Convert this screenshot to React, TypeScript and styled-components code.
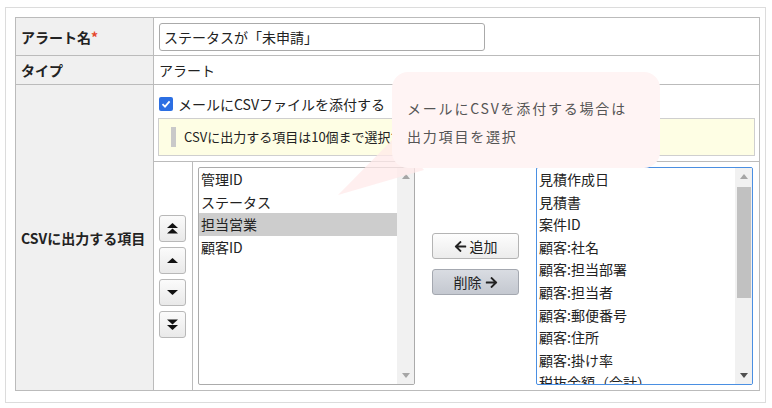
import styled, { createGlobalStyle } from 'styled-components'
import { FaArrowLeft, FaArrowRight } from 'react-icons/fa'

const GlobalStyle = createGlobalStyle`
  html, body {
    margin: 0;
    background: #fff;
  }
  body {
    font-family: "Noto Sans CJK JP", "Noto Sans", sans-serif;
    font-size: 14px;
    color: #222;
  }
  * {
    box-sizing: border-box;
  }
`

const Frame = styled.div`
  position: relative;
  width: 761px;
  margin: 7px 0 0 5px;
  padding: 9px 5px 11px 9px;
  border: 1px solid #dcdcdc;
`

const FormGrid = styled.div`
  display: grid;
  grid-template-columns: 138px 606px;
  grid-template-rows: 38px 29px 306px;
  border-top: 1px solid #bbb;
  border-left: 1px solid #bbb;
`

const LabelCell = styled.div`
  display: flex;
  align-items: center;
  padding-left: 5px;
  background: #f0f0f0;
  font-weight: bold;
  line-height: 20px;
  color: #222;
  border-right: 1px solid #bbb;
  border-bottom: 1px solid #bbb;

  .req {
    color: #e5462b;
  }
`

const ValueCell = styled.div<{ $stack?: boolean }>`
  display: flex;
  flex-direction: ${(p) => (p.$stack ? 'column' : 'row')};
  align-items: ${(p) => (p.$stack ? 'stretch' : 'center')};
  padding: ${(p) => (p.$stack ? '0' : '0 5px')};
  line-height: 20px;
  border-right: 1px solid #bbb;
  border-bottom: 1px solid #bbb;
`

const TextInput = styled.div`
  width: 326px;
  height: 28px;
  padding: 0 4px;
  display: flex;
  align-items: center;
  border: 1px solid #aaa;
  border-radius: 3px;
  font-size: 14px;
  background: #fff;
`

const TopBlock = styled.div`
  padding: 8px 4px 5px 4px;
`

const CheckRow = styled.label`
  display: flex;
  align-items: center;
  gap: 5px;
  height: 22px;
  padding-left: 1px;
  font-size: 14px;
`

const CheckBox = styled.span`
  width: 14px;
  height: 14px;
  border-radius: 2px;
  background: #2c6fe3;
  display: flex;
  align-items: center;
  justify-content: center;
`

const Notice = styled.div`
  margin-top: 3px;
  height: 38px;
  display: flex;
  align-items: center;
  gap: 8px;
  padding-left: 12px;
  background: #fefee4;
  border: 1px solid #cfcfcf;
  font-size: 13px;
  white-space: nowrap;
  overflow: hidden;

  &::before {
    content: '';
    width: 5px;
    height: 20px;
    background: #c9c9c9;
    flex: none;
  }
`

const Picker = styled.div`
  flex: 1;
  display: grid;
  grid-template-columns: 39px 1fr;
  border-top: 1px solid #bbb;
`

const OrderColumn = styled.div`
  display: flex;
  flex-direction: column;
  justify-content: center;
  gap: 5px;
  padding-left: 5px;
  border-right: 1px solid #bbb;
`

const IconButton = styled.button`
  width: 27px;
  height: 27px;
  padding: 0;
  display: flex;
  align-items: center;
  justify-content: center;
  border: 1px solid #b8b8b8;
  border-radius: 3px;
  background: linear-gradient(#fbfbfb, #e9e9e9);
`

const ListArea = styled.div`
  display: flex;
  gap: 17px;
  padding: 5px 6px 5px 5px;
`

const ListBox = styled.div<{ $focused?: boolean }>`
  width: 217px;
  height: 218px;
  display: flex;
  border: 1px solid ${(p) => (p.$focused ? '#4a8fe2' : '#ababab')};
  border-radius: 2px;
  overflow: hidden;
  background: #fff;
`

const Items = styled.div`
  flex: 1;
  overflow: hidden;
`

const Item = styled.div<{ $selected?: boolean }>`
  height: 22.6px;
  line-height: 22.6px;
  padding-left: 2px;
  font-size: 14px;
  white-space: nowrap;
  background: ${(p) => (p.$selected ? '#cdcdcd' : 'transparent')};
`

const ScrollBar = styled.div`
  width: 17px;
  display: flex;
  flex-direction: column;
  background: #f1f1f1;
`

const ScrollArrow = styled.div`
  height: 17px;
  display: flex;
  align-items: center;
  justify-content: center;
`

const ScrollTrack = styled.div`
  flex: 1;
  display: flex;
  justify-content: center;
  align-items: flex-start;
`

const Thumb = styled.div`
  margin-top: 2px;
  width: 14px;
  height: 111px;
  background: #c1c1c1;
`

const MoveColumn = styled.div`
  width: 87px;
  display: flex;
  flex-direction: column;
  gap: 10px;
  padding-top: 66px;
`

const MoveButton = styled.button<{ $pressed?: boolean }>`
  height: 26px;
  padding: 0;
  display: flex;
  align-items: center;
  justify-content: center;
  gap: 3px;
  font-family: inherit;
  font-size: 14px;
  color: #222;
  border: 1px solid ${(p) => (p.$pressed ? '#a4a8b0' : '#b4b4b4')};
  border-radius: 3px;
  background: ${(p) =>
    p.$pressed ? 'linear-gradient(#d9dce2, #c4c8d0)' : 'linear-gradient(#fdfdfd, #ececec)'};
`

const Balloon = styled.div`
  position: absolute;
  left: 386px;
  top: 64px;
  width: 268px;
  height: 96px;
  padding: 22px 0 0 15px;
  border-radius: 16px;
  background: #fff4f4;
  color: #555;
  font-size: 14px;
  line-height: 28px;
  letter-spacing: 1.8px;
  white-space: nowrap;
`

const BalloonTail = styled.svg`
  position: absolute;
  left: 324px;
  top: 112px;
`

type Entry = { label: string; selected?: boolean }

const chosen: Entry[] = [
  { label: '管理ID' },
  { label: 'ステータス' },
  { label: '担当営業', selected: true },
  { label: '顧客ID' },
]

const available: Entry[] = [
  { label: '見積作成日' },
  { label: '見積書' },
  { label: '案件ID' },
  { label: '顧客:社名' },
  { label: '顧客:担当部署' },
  { label: '顧客:担当者' },
  { label: '顧客:郵便番号' },
  { label: '顧客:住所' },
  { label: '顧客:掛け率' },
  { label: '税抜金額（合計）' },
]

function Triangle({ up, color }: { up?: boolean; color: string }) {
  return (
    <svg width="8" height="5" viewBox="0 0 8 5">
      <polygon points={up ? '4,0 8,5 0,5' : '0,0 8,0 4,5'} fill={color} />
    </svg>
  )
}

function OrderIcon({ kind }: { kind: 'top' | 'up' | 'down' | 'bottom' }) {
  const shapes: Record<string, string[]> = {
    top: ['5.5,0 11,5 0,5', '5.5,5.5 11,10.5 0,10.5'],
    up: ['5.5,3 11,8 0,8'],
    down: ['0,3 11,3 5.5,8'],
    bottom: ['0,0.5 11,0.5 5.5,5.5', '0,6 11,6 5.5,11'],
  }
  return (
    <svg width="11" height="11" viewBox="0 0 11 11">
      {shapes[kind].map((pts) => (
        <polygon key={pts} points={pts} fill="#111" />
      ))}
    </svg>
  )
}

function FieldList({ entries, focused, thumb }: { entries: Entry[]; focused?: boolean; thumb?: boolean }) {
  return (
    <ListBox $focused={focused}>
      <Items>
        {entries.map((e) => (
          <Item key={e.label} $selected={e.selected}>
            {e.label}
          </Item>
        ))}
      </Items>
      <ScrollBar>
        <ScrollArrow>
          <Triangle up color="#a6a6a6" />
        </ScrollArrow>
        <ScrollTrack>{thumb && <Thumb />}</ScrollTrack>
        <ScrollArrow>
          <Triangle color={thumb ? '#505050' : '#a6a6a6'} />
        </ScrollArrow>
      </ScrollBar>
    </ListBox>
  )
}

export default function App() {
  return (
    <>
      <GlobalStyle />
      <Frame>
        <FormGrid>
          <LabelCell>
            アラート名<span className="req">*</span>
          </LabelCell>
          <ValueCell>
            <TextInput>ステータスが「未申請」</TextInput>
          </ValueCell>

          <LabelCell>タイプ</LabelCell>
          <ValueCell>アラート</ValueCell>

          <LabelCell>CSVに出力する項目</LabelCell>
          <ValueCell $stack>
            <TopBlock>
              <CheckRow>
                <CheckBox>
                  <svg width="10" height="10" viewBox="0 0 10 10">
                    <polyline points="1.5,5.2 4,7.6 8.6,2.4" fill="none" stroke="#fff" strokeWidth="1.8" />
                  </svg>
                </CheckBox>
                メールにCSVファイルを添付する
              </CheckRow>
              <Notice>CSVに出力する項目は10個まで選択できます。</Notice>
            </TopBlock>
            <Picker>
              <OrderColumn>
                <IconButton>
                  <OrderIcon kind="top" />
                </IconButton>
                <IconButton>
                  <OrderIcon kind="up" />
                </IconButton>
                <IconButton>
                  <OrderIcon kind="down" />
                </IconButton>
                <IconButton>
                  <OrderIcon kind="bottom" />
                </IconButton>
              </OrderColumn>
              <ListArea>
                <FieldList entries={chosen} />
                <MoveColumn>
                  <MoveButton>
                    <FaArrowLeft size={13} />
                    追加
                  </MoveButton>
                  <MoveButton $pressed>
                    削除
                    <FaArrowRight size={13} />
                  </MoveButton>
                </MoveColumn>
                <FieldList entries={available} focused thumb />
              </ListArea>
            </Picker>
          </ValueCell>
        </FormGrid>

        <BalloonTail width="100" height="80" viewBox="0 0 100 80">
          <polygon points="8,75 66,16 94,50" fill="#ffe9e9" fillOpacity="0.75" />
        </BalloonTail>
        <Balloon>
          メールにCSVを添付する場合は
          <br />
          出力項目を選択
        </Balloon>
      </Frame>
    </>
  )
}
